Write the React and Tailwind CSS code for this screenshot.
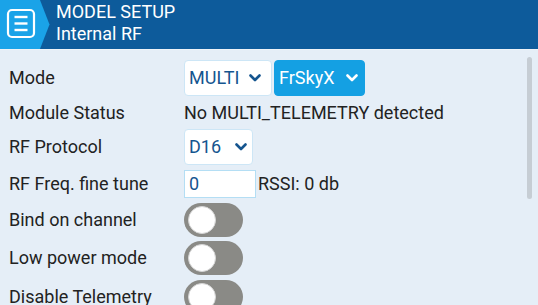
import React from "react";

const Chevron = ({ color }) => (
  <svg width="12" height="8" viewBox="0 0 12 8" className="shrink-0">
    <path d="M1.5 1.5 L6 6 L10.5 1.5" fill="none" stroke={color} strokeWidth="2.6" strokeLinecap="round" strokeLinejoin="round" />
  </svg>
);

const Select = ({ value, width, pr, active }) => (
  <div
    className={
      "flex items-center justify-between h-[36px] pl-[4px] rounded-[4px] border " +
      (active ? "bg-[#14a0e3] border-[#14a0e3] text-white" : "bg-white border-[#cde6f6] text-[#15558f]")
    }
    style={{ width, paddingRight: pr }}
  >
    <span>{value}</span>
    <Chevron color={active ? "#ffffff" : "#15558f"} />
  </div>
);

const Toggle = () => (
  <div className="w-[59px] h-[34px] rounded-full bg-[#8a8a86] flex items-center pl-[4px]">
    <div className="w-[28px] h-[28px] rounded-full bg-white border border-[#d6d6d6]" />
  </div>
);

const Row = ({ label, h, children }) => (
  <div className="flex items-center" style={{ height: h }}>
    <div className="w-[175px] shrink-0">{label}</div>
    <div className="flex items-center">{children}</div>
  </div>
);

export default function App() {
  return (
    <div className="w-[538px] h-[305px] overflow-hidden bg-[#e5eef7] font-['Roboto',sans-serif] text-[18px] leading-[22px] text-[#222222]">
      <div className="h-[49px] bg-[#0d5b9b] flex">
        <div className="relative w-[50px] h-[49px]">
          <svg width="50" height="49" viewBox="0 0 50 49" className="absolute inset-0">
            <polygon points="0,0 40,0 49.5,24.5 40,49 0,49" fill="#1aa3e8" />
            <rect x="8" y="10" width="26" height="27" rx="4" fill="none" stroke="#ffffff" strokeWidth="2.2" />
            <line x1="14.5" y1="17" x2="27.5" y2="17" stroke="#ffffff" strokeWidth="2.4" />
            <line x1="14.5" y1="23.5" x2="27.5" y2="23.5" stroke="#ffffff" strokeWidth="2.4" />
            <line x1="14.5" y1="30" x2="27.5" y2="30" stroke="#ffffff" strokeWidth="2.4" />
          </svg>
        </div>
        <div className="pl-[6px] text-white pt-[1px]">
          <div>MODEL SETUP</div>
          <div>Internal RF</div>
        </div>
      </div>
      <div className="h-[1px] bg-[#eef3f8]" />
      <div className="relative pl-[9px] pt-[10px]">
        <Row label="Mode" h="36px">
          <Select value="MULTI" width="88px" pr="10px" />
          <div className="w-[2px]" />
          <Select value="FrSkyX" width="91px" pr="6px" active />
        </Row>
        <Row label="Module Status" h="33px">
          <span>No MULTI_TELEMETRY detected</span>
        </Row>
        <Row label="RF Protocol" h="36px">
          <Select value="D16" width="69px" pr="5px" />
        </Row>
        <Row label="RF Freq. fine tune" h="38px">
          <div className="w-[72px] h-[28px] bg-white border border-[#b4def4] pl-[4px] flex items-center text-[#15558f]">0</div>
          <span className="pl-[2px]">RSSI: 0 db</span>
        </Row>
        <Row label="Bind on channel" h="34px">
          <Toggle />
        </Row>
        <div className="h-[4px]" />
        <Row label="Low power mode" h="34px">
          <Toggle />
        </Row>
        <div className="h-[5px]" />
        <Row label="Disable Telemetry" h="34px">
          <Toggle />
        </Row>
        <div className="absolute left-[527px] top-[7px] w-[5px] h-[142px] rounded-full bg-[#c6cdd4]" />
      </div>
    </div>
  );
}
